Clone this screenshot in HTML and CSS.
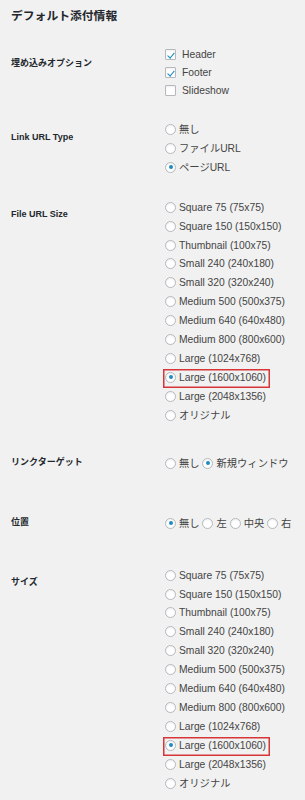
FILE: index.html
```html
<!DOCTYPE html>
<html>
<head>
    <title>デフォルト添付情報</title>
    <meta name="viewport" content="width=device-width, initial-scale=1.0">
    <link rel="stylesheet" href="styles.css">
</head>
<body>
    <h2 class="title">デフォルト添付情報</h2>

    <div class="form-table">
        <!-- Embed options -->
        <div class="row">
            <div class="label">埋め込みオプション</div>
            <div class="field checks">
                <label><input type="checkbox" checked>Header</label>
                <label><input type="checkbox" checked>Footer</label>
                <label><input type="checkbox">Slideshow</label>
            </div>
        </div>

        <!-- Link URL type -->
        <div class="row">
            <div class="label">Link URL Type</div>
            <div class="field list">
                <label><input type="radio" name="link">無し</label>
                <label><input type="radio" name="link">ファイルURL</label>
                <label><input type="radio" name="link" checked>ページURL</label>
            </div>
        </div>

        <!-- File URL size -->
        <div class="row">
            <div class="label">File URL Size</div>
            <div class="field list">
                <label><input type="radio" name="fsize">Square 75 (75x75)</label>
                <label><input type="radio" name="fsize">Square 150 (150x150)</label>
                <label><input type="radio" name="fsize">Thumbnail (100x75)</label>
                <label><input type="radio" name="fsize">Small 240 (240x180)</label>
                <label><input type="radio" name="fsize">Small 320 (320x240)</label>
                <label><input type="radio" name="fsize">Medium 500 (500x375)</label>
                <label><input type="radio" name="fsize">Medium 640 (640x480)</label>
                <label><input type="radio" name="fsize">Medium 800 (800x600)</label>
                <label><input type="radio" name="fsize">Large (1024x768)</label>
                <label><span class="mark"><input type="radio" name="fsize" checked>Large (1600x1060)</span></label>
                <label><input type="radio" name="fsize">Large (2048x1356)</label>
                <label><input type="radio" name="fsize">オリジナル</label>
            </div>
        </div>

        <!-- Link target -->
        <div class="row">
            <div class="label">リンクターゲット</div>
            <div class="field inline">
                <label><input type="radio" name="target">無し</label>
                <label><input type="radio" name="target" checked>新規ウィンドウ</label>
            </div>
        </div>

        <!-- Align -->
        <div class="row">
            <div class="label">位置</div>
            <div class="field inline">
                <label><input type="radio" name="align" checked>無し</label>
                <label><input type="radio" name="align">左</label>
                <label><input type="radio" name="align">中央</label>
                <label><input type="radio" name="align">右</label>
            </div>
        </div>

        <!-- Size -->
        <div class="row">
            <div class="label">サイズ</div>
            <div class="field list">
                <label><input type="radio" name="size">Square 75 (75x75)</label>
                <label><input type="radio" name="size">Square 150 (150x150)</label>
                <label><input type="radio" name="size">Thumbnail (100x75)</label>
                <label><input type="radio" name="size">Small 240 (240x180)</label>
                <label><input type="radio" name="size">Small 320 (320x240)</label>
                <label><input type="radio" name="size">Medium 500 (500x375)</label>
                <label><input type="radio" name="size">Medium 640 (640x480)</label>
                <label><input type="radio" name="size">Medium 800 (800x600)</label>
                <label><input type="radio" name="size">Large (1024x768)</label>
                <label><span class="mark"><input type="radio" name="size" checked>Large (1600x1060)</span></label>
                <label><input type="radio" name="size">Large (2048x1356)</label>
                <label><input type="radio" name="size">オリジナル</label>
            </div>
        </div>
    </div>
</body>
</html>
```

FILE: styles.css
```css
:root {
    --text: #444;
    --heading: #23282d;
    --blue: #1e8cbe;
    --border: #b4b9be;
    --red: #d63638;
}

body {
    margin: 0;
    padding: 0 11px;
    background: #f1f1f1;
    color: var(--text);
    font-family: "Liberation Sans", "Noto Sans CJK JP", sans-serif;
    font-size: 10.3px;
}

.title {
    margin: 8px 0 9px;
    font-size: 11.8px;
    line-height: 16px;
    font-weight: bold;
    color: var(--heading);
}

.row {
    display: grid;
    grid-template-columns: 154px 1fr;
}

.label {
    padding-top: 23.5px;
    font-size: 9px;
    line-height: 13px;
    font-weight: bold;
    color: var(--heading);
}

.field label {
    white-space: nowrap;
}

.checks {
    padding: 13px 0 7px;
}

.checks label {
    display: block;
    line-height: 18px;
}

.list {
    padding: 14px 0 7px;
}

.list label {
    display: block;
    line-height: 18.9px;
}

.inline {
    padding: 21px 0 20px;
    line-height: 19px;
}

input[type=checkbox],
input[type=radio] {
    appearance: none;
    -webkit-appearance: none;
    position: relative;
    width: 11px;
    height: 11px;
    margin: 0 3px 0 0;
    border: 1px solid var(--border);
    background: #fff;
    box-shadow: inset 0 1px 2px rgba(0,0,0,0.07);
    vertical-align: -2px;
    box-sizing: border-box;
}

input[type=checkbox] {
    margin-right: 6px;
    border-radius: 1px;
}

input[type=checkbox]:checked::before {
    content: "";
    position: absolute;
    left: 3px;
    top: 0.5px;
    width: 2.5px;
    height: 6px;
    border: solid var(--blue);
    border-width: 0 1.5px 1.5px 0;
    transform: rotate(40deg);
}

input[type=radio] {
    border-radius: 50%;
}

input[type=radio]:checked::before {
    content: "";
    position: absolute;
    left: 2.5px;
    top: 2.5px;
    width: 4px;
    height: 4px;
    border-radius: 50%;
    background: var(--blue);
}

.mark {
    display: inline-block;
    margin-left: -2px;
    padding: 0 4px 0 2px;
    box-shadow: inset 0 0 0 1.5px var(--red);
}
```
